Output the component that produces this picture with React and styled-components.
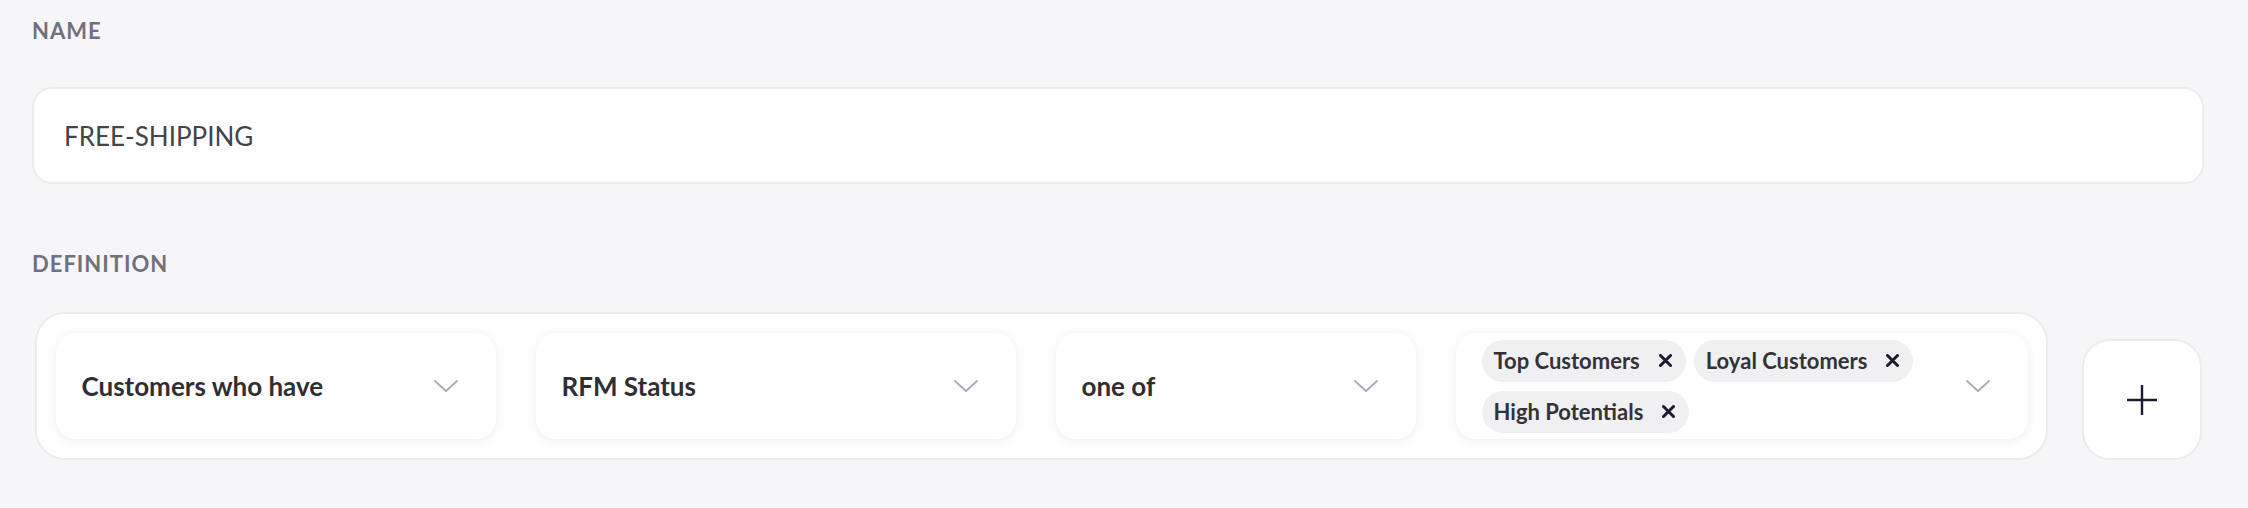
import React from 'react';
import styled, { createGlobalStyle } from 'styled-components';

const GlobalStyle = createGlobalStyle`
    html, body {
        margin: 0;
        background: #f6f6f8;
        font-family: Lato, "Noto Sans", sans-serif;
    }
`;

const Chevron = () => (
    <svg width="24" height="12" viewBox="0 0 24 12" fill="none">
        <path d="M1 1 L12 11 L23 1" stroke="#aeadbd" strokeWidth="2" strokeLinecap="round" strokeLinejoin="round" />
    </svg>
);

const CloseIcon = () => (
    <svg width="13" height="13" viewBox="0 0 13 13" fill="none">
        <path d="M1.5 1.5 L11.5 11.5 M11.5 1.5 L1.5 11.5" stroke="#1b1b2d" strokeWidth="3" strokeLinecap="round" />
    </svg>
);

const PlusIcon = () => (
    <svg width="30" height="30" viewBox="0 0 30 30" fill="none">
        <path d="M15 0 V30 M0 15 H30" stroke="#1c1c2c" strokeWidth="2.4" />
    </svg>
);

const selects = [
    { id: 'who', label: 'Customers who have', width: 440 },
    { id: 'field', label: 'RFM Status', width: 480 },
    { id: 'op', label: 'one of', width: 360 },
];

const tags = ['Top Customers', 'Loyal Customers', 'High Potentials'];

const App = () => (
    <Page>
        <GlobalStyle />
        <Label>Name</Label>
        <NameInput>FREE-SHIPPING</NameInput>

        <Label spaced>Definition</Label>
        <DefRow>
            <Rule>
                {selects.map(s => (
                    <Select key={s.id} width={s.width}>
                        <SelectText>{s.label}</SelectText>
                        <Chevron />
                    </Select>
                ))}
                <Select width={572} multi>
                    <Tags>
                        {tags.map(t => (
                            <Tag key={t}>
                                {t}
                                <CloseIcon />
                            </Tag>
                        ))}
                    </Tags>
                    <Chevron />
                </Select>
            </Rule>
            <AddButton>
                <PlusIcon />
            </AddButton>
        </DefRow>
    </Page>
);

export default App;

const Page = styled.div`
    padding: 18px 44px 0 32px;
    min-height: 508px;
    box-sizing: border-box;
`;

const Label = styled.div`
    font-size: 22px;
    line-height: 26px;
    font-weight: 700;
    color: #71707e;
    letter-spacing: 1px;
    text-transform: uppercase;
    margin-top: ${props => props.spaced ? '67px' : '0'};
`;

const NameInput = styled.div`
    margin-top: 43px;
    height: 97px;
    box-sizing: border-box;
    border: 2px solid #ededef;
    border-radius: 20px;
    background: #fff;
    padding: 0 30px;
    display: flex;
    align-items: center;
    font-size: 26px;
    color: #444447;
`;

const DefRow = styled.div`
    margin-top: 35px;
    padding-left: 3px;
    display: flex;
    align-items: flex-end;
    gap: 34px;
`;

const Rule = styled.div`
    flex: 1;
    box-sizing: border-box;
    height: 148px;
    border: 2px solid #ececef;
    border-radius: 30px;
    background: #fff;
    padding: 19px 18.5px;
    display: flex;
    gap: 40px;
`;

const Select = styled.div`
    flex: 0 0 ${props => props.width}px;
    height: 106px;
    box-sizing: border-box;
    background: #fff;
    border-radius: 20px;
    box-shadow: 0 2px 10px rgba(20, 20, 40, 0.07);
    padding: ${props => props.multi ? '6px 38px 6px 26px' : '0 38px 0 26px'};
    display: flex;
    align-items: center;
    justify-content: space-between;
`;

const SelectText = styled.span`
    font-size: 26px;
    font-weight: 700;
    color: #2f2f33;
`;

const Tags = styled.div`
    display: flex;
    flex-wrap: wrap;
    gap: 9px 8px;
    max-width: 470px;
`;

const Tag = styled.span`
    height: 42px;
    box-sizing: border-box;
    padding: 0 14px 0 12px;
    border-radius: 21px;
    background: #f0f0f3;
    display: inline-flex;
    align-items: center;
    gap: 19px;
    font-size: 22px;
    font-weight: 700;
    color: #333337;
`;

const AddButton = styled.div`
    flex: 0 0 120px;
    height: 121px;
    margin-right: 2px;
    box-sizing: border-box;
    border: 2px solid #ececef;
    border-radius: 28px;
    background: #fff;
    display: flex;
    align-items: center;
    justify-content: center;
`;
